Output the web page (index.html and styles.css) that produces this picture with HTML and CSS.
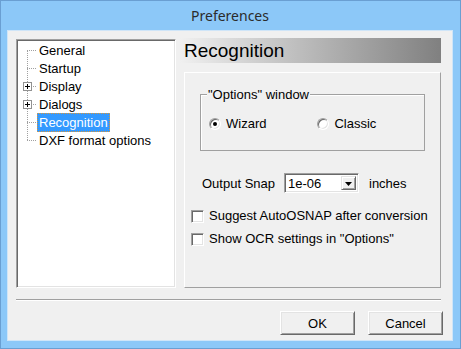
FILE: index.html
```html
<!DOCTYPE html>
<html lang="en">

<head>
    <meta charset="UTF-8">
    <title>Preferences</title>
    <link rel="stylesheet" href="styles.css">
</head>

<body>
    <div class="window">
        <div class="titlebar">Preferences</div>
        <div class="client">
            <div class="main">
                <div class="tree">
                    <div class="branches">
                        <div class="node"><span class="label">General</span></div>
                        <div class="node"><span class="label">Startup</span></div>
                        <div class="node"><span class="expander"></span><span class="label">Display</span></div>
                        <div class="node"><span class="expander"></span><span class="label">Dialogs</span></div>
                        <div class="node"><span class="label selected">Recognition</span></div>
                        <div class="node"><span class="label">DXF format options</span></div>
                    </div>
                </div>
                <div class="page">
                    <div class="page-title">Recognition</div>
                    <div class="page-body">
                        <div class="group">
                            <div class="group-title">"Options" window</div>
                            <div class="radios">
                                <label class="radio"><span class="radio-dot checked"></span>Wizard</label>
                                <label class="radio"><span class="radio-dot"></span>Classic</label>
                            </div>
                        </div>
                        <div class="snap-row">
                            <span>Output Snap</span>
                            <div class="combo">
                                <span class="combo-value">1e-06</span>
                                <span class="combo-button"></span>
                            </div>
                            <span>inches</span>
                        </div>
                        <label class="check first"><span class="box"></span>Suggest AutoOSNAP after conversion</label>
                        <label class="check"><span class="box"></span>Show OCR settings in "Options"</label>
                    </div>
                </div>
            </div>
            <div class="separator"></div>
            <div class="buttons">
                <button class="btn">OK</button>
                <button class="btn">Cancel</button>
            </div>
        </div>
    </div>
</body>

</html>
```

FILE: styles.css
```css
/* Reset */
* {
    margin: 0;
    padding: 0;
    box-sizing: border-box;
}

body {
    font-family: 'Liberation Sans', Arial, sans-serif;
    font-size: 13px;
    color: #000;
    background: #8cc8f8;
}

/* Window frame */
.window {
    width: 461px;
    height: 349px;
    border: 1px solid #6a9fd2;
    background: #8cc8f8;
    padding: 0 7px 7px 6px;
    display: flex;
    flex-direction: column;
}

.titlebar {
    height: 29px;
    line-height: 29px;
    text-align: center;
    font-family: 'Noto Sans', 'Open Sans', sans-serif;
    font-size: 14px;
    color: #2b2b2b;
}

.client {
    flex: 1;
    background: #f0f0f0;
    border: 1px solid #cfe5f8;
    padding: 7px 11px 0 8px;
}

/* Main row */
.main {
    display: flex;
    gap: 4px;
    height: 250px;
}

/* Tree */
.tree {
    width: 160px;
    height: 249px;
    margin-top: 1px;
    background: #fff;
    border: 1px solid;
    border-color: #a0a0a0 #fff #fff #a0a0a0;
    box-shadow: inset 1px 1px 0 #696969, inset -1px -1px 0 #e3e3e3;
    padding: 1px;
}

.branches {
    position: relative;
}

.branches::before {
    content: "";
    position: absolute;
    left: 9px;
    top: 9px;
    bottom: 9px;
    border-left: 1px dotted #a0a0a0;
}

.node {
    position: relative;
    height: 18px;
    padding-left: 19px;
    display: flex;
    align-items: center;
}

.node::before {
    content: "";
    position: absolute;
    left: 9px;
    top: 9px;
    width: 9px;
    border-top: 1px dotted #a0a0a0;
}

.expander {
    position: absolute;
    left: 5px;
    top: 5px;
    width: 9px;
    height: 9px;
    border: 1px solid #919191;
    background: #fff;
    z-index: 1;
}

.expander::before,
.expander::after {
    content: "";
    position: absolute;
    background: #000;
}

.expander::before {
    left: 1px;
    top: 3px;
    width: 5px;
    height: 1px;
}

.expander::after {
    left: 3px;
    top: 1px;
    width: 1px;
    height: 5px;
}

.label {
    line-height: 17px;
    padding: 0 1px;
    border: 1px solid transparent;
    white-space: nowrap;
}

.label.selected {
    background: #3399ff;
    color: #fff;
    border: 1px dotted #d9963a;
}

/* Page */
.page {
    width: 261px;
}

.page-title {
    height: 25px;
    line-height: 25px;
    padding-left: 4px;
    font-size: 19px;
    background: linear-gradient(to right, #f0f0f0, #808080);
}

.page-body {
    margin: 9px 0 0 4px;
    height: 216px;
    border: 1px solid;
    border-color: #fff #a0a0a0 #a0a0a0 #fff;
    padding-left: 15px;
}

.group {
    margin-top: 21px;
    width: 225px;
    height: 57px;
    border: 1px solid #a0a0a0;
    box-shadow: inset 1px 1px 0 #fff;
    padding-left: 8px;
}

.group-title {
    margin: -8px 0 0 -2px;
    padding: 0 1px;
    width: fit-content;
    line-height: 15px;
    background: #f0f0f0;
}

.radios {
    display: flex;
    gap: 51px;
    margin-top: 14px;
}

.radio {
    display: flex;
    align-items: center;
    gap: 5px;
    line-height: 16px;
}

.radio-dot {
    position: relative;
    width: 12px;
    height: 12px;
    border-radius: 50%;
    background: #fff;
    border: 1px solid;
    border-color: #a0a0a0 #fff #fff #a0a0a0;
    box-shadow: inset 1px 1px 0 #696969, inset -1px -1px 0 #e3e3e3;
}

.radio-dot.checked::after {
    content: "";
    position: absolute;
    left: 3px;
    top: 3px;
    width: 4px;
    height: 4px;
    border-radius: 50%;
    background: #000;
}

.snap-row {
    display: flex;
    align-items: center;
    margin: 22px 0 0 2px;
    height: 20px;
}

.combo {
    display: flex;
    width: 75px;
    height: 20px;
    margin: 0 10px 0 9px;
    background: #fff;
    border: 1px solid;
    border-color: #a0a0a0 #fff #fff #a0a0a0;
    box-shadow: inset 1px 1px 0 #696969, inset -1px -1px 0 #e3e3e3;
    padding: 2px;
}

.combo-value {
    flex: 1;
    line-height: 15px;
    padding-left: 1px;
}

.combo-button {
    position: relative;
    width: 15px;
    background: #f0f0f0;
    border: 1px solid;
    border-color: #e3e3e3 #696969 #696969 #e3e3e3;
    box-shadow: inset 1px 1px 0 #fff, inset -1px -1px 0 #a0a0a0;
}

.combo-button::after {
    content: "";
    position: absolute;
    left: 3px;
    top: 5px;
    width: 7px;
    height: 4px;
    background: #000;
    clip-path: polygon(0 0, 100% 0, 50% 100%);
}

.check {
    display: flex;
    align-items: center;
    gap: 5px;
    line-height: 16px;
    margin: 7px 0 0 -9px;
}

.check.first {
    margin-top: 15px;
}

.box {
    width: 13px;
    height: 13px;
    background: #fff;
    border: 1px solid;
    border-color: #a0a0a0 #fff #fff #a0a0a0;
    box-shadow: inset 1px 1px 0 #696969, inset -1px -1px 0 #e3e3e3;
}

/* Bottom */
.separator {
    margin-top: 11px;
    height: 2px;
    border-top: 1px solid #a0a0a0;
    border-bottom: 1px solid #fff;
}

.buttons {
    display: flex;
    justify-content: flex-end;
    gap: 13px;
    margin: 10px -2px 0 0;
}

.btn {
    width: 75px;
    height: 24px;
    font-family: 'Liberation Sans', Arial, sans-serif;
    font-size: 13px;
    color: #000;
    background: #f0f0f0;
    border: 1px solid;
    border-color: #fff #696969 #696969 #fff;
    box-shadow: inset 1px 1px 0 #e3e3e3, inset -1px -1px 0 #a0a0a0;
}
```
